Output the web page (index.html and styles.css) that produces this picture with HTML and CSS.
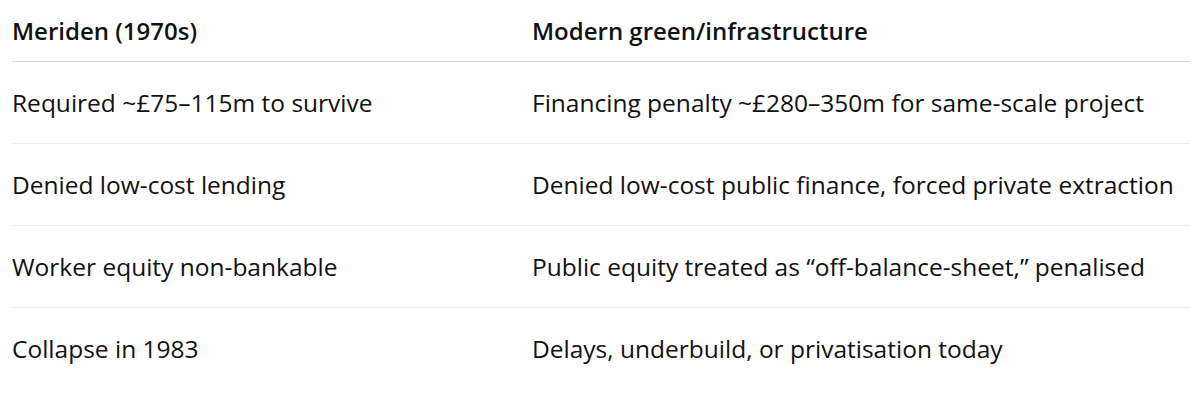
FILE: index.html
```html
<!DOCTYPE html>
<html lang="en">
<head>
<meta charset="utf-8">
<title>Meriden comparison</title>
<link rel="stylesheet" href="styles.css">
</head>
<body>
<div class="table">
  <div class="row head">
    <div class="cell">Meriden (1970s)</div>
    <div class="cell">Modern green/infrastructure</div>
  </div>
  <div class="row">
    <div class="cell">Required ~£75–115m to survive</div>
    <div class="cell">Financing penalty ~£280–350m for same-scale project</div>
  </div>
  <div class="row">
    <div class="cell">Denied low-cost lending</div>
    <div class="cell">Denied low-cost public finance, forced private extraction</div>
  </div>
  <div class="row">
    <div class="cell">Worker equity non-bankable</div>
    <div class="cell">Public equity treated as “off-balance-sheet,” penalised</div>
  </div>
  <div class="row last">
    <div class="cell">Collapse in 1983</div>
    <div class="cell">Delays, underbuild, or privatisation today</div>
  </div>
</div>
</body>
</html>
```

FILE: styles.css
```css
html, body {
  margin: 0;
  padding: 0;
  background: #ffffff;
}
body {
  font-family: "Open Sans", "Noto Sans", sans-serif;
  font-size: 24.5px;
  color: #111111;
  padding: 0 8px 0 12px;
}
.table {
  display: flex;
  flex-direction: column;
  width: 1178px;
}
.row {
  display: grid;
  grid-template-columns: 520px 1fr;
  align-items: center;
  height: 81px;
  border-bottom: 1px solid #ededed;
}
.row.head {
  height: 61px;
  font-size: 24px;
  font-weight: 600;
  border-bottom: 1px solid #d9d9d9;
}
.row.last {
  border-bottom: none;
}
.cell {
  white-space: nowrap;
}
```
